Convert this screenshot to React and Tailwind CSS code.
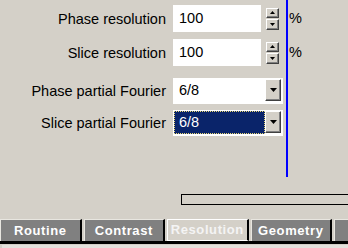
const font = { fontFamily: '"Liberation Sans", Arial, sans-serif' }

const Bevel = ({ className = "", children }) => (
  <div className={`flex items-center justify-center bg-[#d4d0c8] border border-t-white border-l-white border-r-[#404040] border-b-[#404040] shadow-[inset_-1px_-1px_#808080] ${className}`}>
    {children}
  </div>
)

const Arrow = ({ up, w = 7, h = 4 }) => (
  <svg width={w} height={h} viewBox={`0 0 ${w} ${h}`}>
    {up ? <polygon points={`0,${h} ${w},${h} ${w / 2},0`} fill="#000" /> : <polygon points={`0,0 ${w},0 ${w / 2},${h}`} fill="#000" />}
  </svg>
)

const Label = ({ children }) => (
  <div className="w-[166px] text-right text-[14.5px] text-black leading-none pt-px">{children}</div>
)

const SpinRow = ({ label, value, className }) => (
  <div className={`flex items-center h-[27px] ${className}`}>
    <Label>{label}</Label>
    <div className="ml-[7px] w-[88px] h-full bg-white flex items-center pl-[6px] text-[14.5px] text-black">{value}</div>
    <div className="ml-[5px] w-[13px] h-[22px] flex flex-col gap-px">
      <Bevel className="h-[10px]"><Arrow up w={5} h={3} /></Bevel>
      <Bevel className="h-[11px]"><Arrow w={5} h={3} /></Bevel>
    </div>
  </div>
)

const ComboRow = ({ label, value, selected, className }) => (
  <div className={`flex items-center h-[26px] ${className}`}>
    <Label>{label}</Label>
    <div className="ml-[7px] w-[110px] h-full bg-white flex items-start p-px">
      {selected ? (
        <div className="w-[91px] h-[23px] bg-[#0a246a] border border-dotted border-[#e8d878] flex items-center pl-[4px] text-[14.5px] text-white">{value}</div>
      ) : (
        <div className="w-[91px] h-[23px] flex items-center pl-[5px] text-[14.5px] text-black">{value}</div>
      )}
      <Bevel className="w-[16px] h-[22px]"><Arrow /></Bevel>
    </div>
  </div>
)

const tabs = ["Routine", "Contrast", "Resolution", "Geometry"]

export default function App() {
  return (
    <div style={font} className="w-[348px] h-[248px] bg-[#d4d0c8] overflow-hidden flex flex-col">
      <div className="flex h-[177px]">
        <div className="w-[286px] flex flex-col">
          <SpinRow label="Phase resolution" value="100" className="mt-[5px]" />
          <SpinRow label="Slice resolution" value="100" className="mt-[7px]" />
          <ComboRow label="Phase partial Fourier" value="6/8" className="mt-[12px]" />
          <ComboRow label="Slice partial Fourier" value="6/8" selected className="mt-[6px]" />
        </div>
        <div className="w-[2px] h-full bg-[#0000ff]" />
        <div className="flex flex-col pl-px text-[14.5px] text-black">
          <div className="mt-[5px] h-[27px] flex items-center">%</div>
          <div className="mt-[7px] h-[27px] flex items-center">%</div>
        </div>
      </div>
      <div className="mt-[17px] ml-[181px] w-[200px] h-[11px] border border-black shrink-0" />
      <div className="mt-[14px] flex gap-[2px] h-[22px] shrink-0">
        {tabs.map((t) => {
          const active = t === "Resolution"
          return (
            <div
              key={t}
              className={`w-[82px] h-full flex items-center justify-center font-bold text-[13px] tracking-[0.6px] border-t border-l border-r-2 border-t-[#e8e6e0] border-l-[#e8e6e0] border-r-black ${active ? "bg-[#d4d0c8] text-[#f4f4f4] border-t-white border-l-white border-b border-b-white" : "bg-[#808080] text-white"}`}
            >
              {t}
            </div>
          )
        })}
        <div className="w-[14px] h-full bg-[#808080] border-t border-l border-t-[#e8e6e0] border-l-[#e8e6e0]" />
      </div>
      <div className="h-[3px] bg-black shrink-0" />
      <div className="ml-[2px] h-[3px] mt-px bg-[#e4e1dc] shrink-0" />
    </div>
  )
}
